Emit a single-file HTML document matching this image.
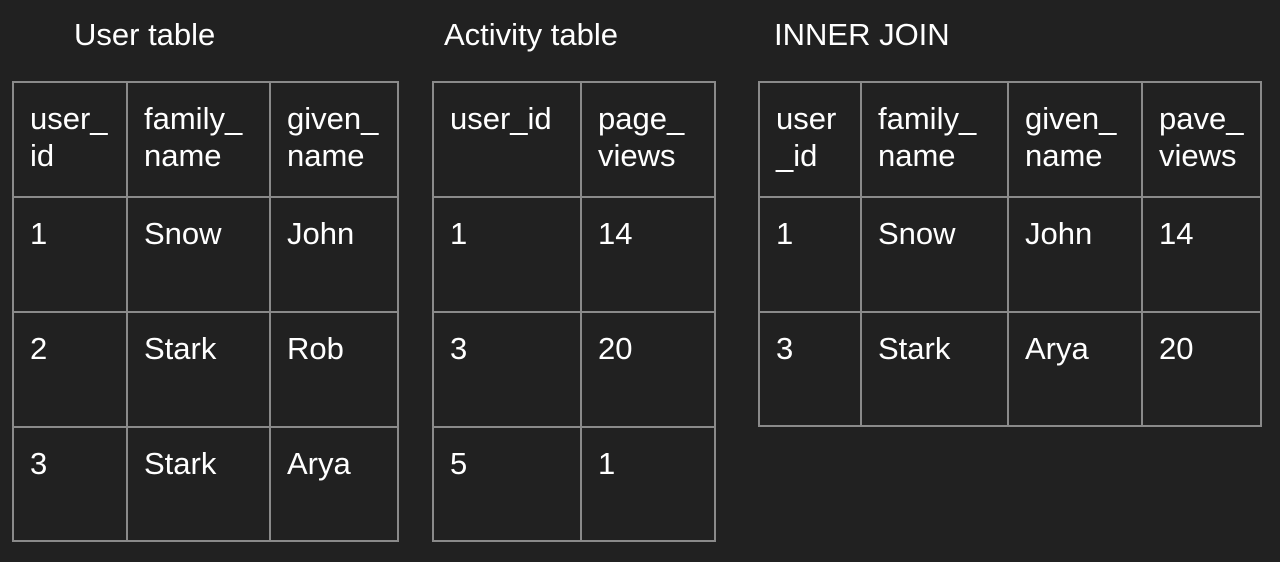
<!DOCTYPE html>
<html><head><style>
body{margin:0;width:1280px;height:562px;background:#212121;font-family:"Liberation Sans",Arial,sans-serif;color:#fff;position:relative;overflow:hidden}
.t{position:absolute;font-size:31px;top:17px;line-height:36px}
table{position:absolute;border-collapse:collapse;top:81px}
td{border:2px solid #8a8a8a;vertical-align:top;padding:17px 0 0 16px;font-size:31px;line-height:37px;box-sizing:border-box}
</style></head><body>
<div class="t" style="left:74px">User table</div>
<div class="t" style="left:444px">Activity table</div>
<div class="t" style="left:774px">INNER JOIN</div>
<table style="left:12px"><colgroup><col style="width:114px"><col style="width:143px"><col style="width:128px"></colgroup>
<tr style="height:115px"><td>user_<br>id</td><td>family_<br>name</td><td>given_<br>name</td></tr>
<tr style="height:115px"><td>1</td><td>Snow</td><td>John</td></tr>
<tr style="height:115px"><td>2</td><td>Stark</td><td>Rob</td></tr>
<tr style="height:114px"><td>3</td><td>Stark</td><td>Arya</td></tr>
</table>
<table style="left:432px"><colgroup><col style="width:148px"><col style="width:134px"></colgroup>
<tr style="height:115px"><td>user_id</td><td>page_<br>views</td></tr>
<tr style="height:115px"><td>1</td><td>14</td></tr>
<tr style="height:115px"><td>3</td><td>20</td></tr>
<tr style="height:114px"><td>5</td><td>1</td></tr>
</table>
<table style="left:758px"><colgroup><col style="width:102px"><col style="width:147px"><col style="width:134px"><col style="width:119px"></colgroup>
<tr style="height:115px"><td>user<br>_id</td><td>family_<br>name</td><td>given_<br>name</td><td>pave_<br>views</td></tr>
<tr style="height:115px"><td>1</td><td>Snow</td><td>John</td><td>14</td></tr>
<tr style="height:114px"><td>3</td><td>Stark</td><td>Arya</td><td>20</td></tr>
</table>
</body></html>
